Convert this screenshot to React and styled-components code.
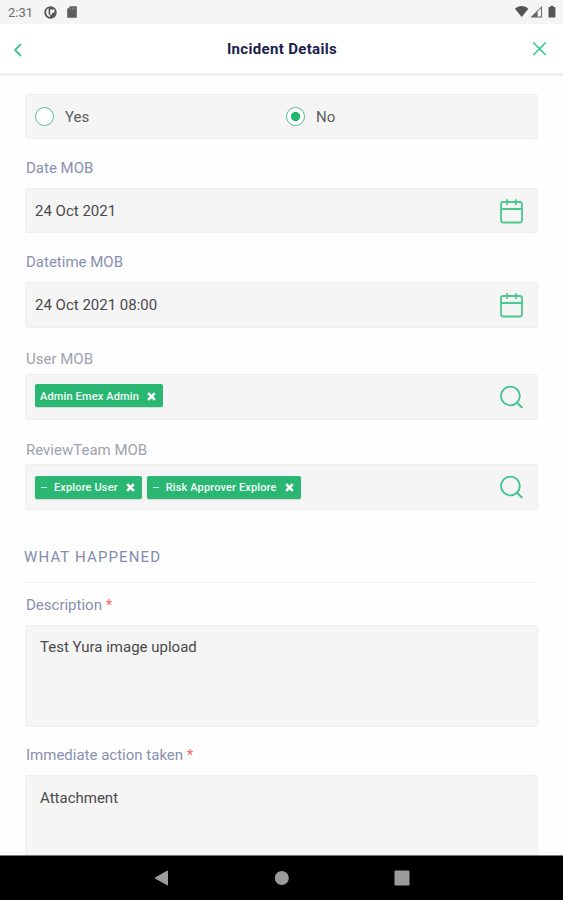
import React, { useState } from 'react';
import styled, { createGlobalStyle } from 'styled-components';

function App() {
  const [answer, setAnswer] = useState('No');

  return (
    <>
      <GlobalStyle />
      <Screen>
        <StatusBar>
          <StatusGroup>
            <Clock>2:31</Clock>
            <ProfileIcon />
            <SdCardIcon />
          </StatusGroup>
          <SystemIcons />
        </StatusBar>

        <Header>
          <IconButton aria-label="Back">
            <svg width="12" height="18" viewBox="0 0 12 18">
              <path d="m10 4-6 6 6 6" fill="none" stroke="#3fc58a" strokeWidth="1.8" />
            </svg>
          </IconButton>
          <Title>Incident Details</Title>
          <IconButton aria-label="Close">
            <svg width="16" height="16" viewBox="0 0 16 16">
              <path d="m1.3 1.5 12.5 12.5M13.8 1.5 1.3 14" fill="none" stroke="#35cb8b" strokeWidth="1.7" />
            </svg>
          </IconButton>
        </Header>

        <Form>
          <RadioBox>
            {['Yes', 'No'].map((option) => (
              <Radio key={option} onClick={() => setAnswer(option)}>
                <RadioDot $checked={answer === option} />
                {option}
              </Radio>
            ))}
          </RadioBox>

          <Label $height={49}>Date MOB</Label>
          <Field $height={45}>
            <span>24 Oct 2021</span>
            <CalendarIcon />
          </Field>

          <Label $height={49}>Datetime MOB</Label>
          <Field $height={46}>
            <span>24 Oct 2021 08:00</span>
            <CalendarIcon />
          </Field>

          <Label $height={46} $top={21} $muted>User MOB</Label>
          <Field $height={46}>
            <Tags $lift={3}>
              <Tag>Admin Emex Admin <TagClose /></Tag>
            </Tags>
            <SearchIcon />
          </Field>

          <Label $height={44} $top={20} $muted>ReviewTeam MOB</Label>
          <Field $height={46}>
            <Tags>
              <Tag><Dash />Explore User <TagClose /></Tag>
              <Tag><Dash />Risk Approver Explore <TagClose /></Tag>
            </Tags>
            <SearchIcon />
          </Field>

          <SectionTitle>WHAT HAPPENED</SectionTitle>

          <Label $height={42} $top={12}>Description <Required>*</Required></Label>
          <TextArea>Test Yura image upload</TextArea>

          <Label $height={48} $top={18}>Immediate action taken <Required>*</Required></Label>
          <TextArea $top={12}>Attachment</TextArea>
        </Form>

        <NavBar>
          <svg width="16" height="18" viewBox="0 0 16 18">
            <path d="M13.5 2v14L1 9Z" fill="#9b9b9b" stroke="#9b9b9b" strokeLinejoin="round" />
          </svg>
          <svg width="16" height="18" viewBox="0 0 16 18">
            <circle cx="7.8" cy="9" r="7" fill="#9b9b9b" />
          </svg>
          <svg width="16" height="18" viewBox="0 0 16 18">
            <rect x="0.5" y="1.5" width="15" height="15" rx="1.2" fill="#9b9b9b" />
          </svg>
        </NavBar>
      </Screen>
    </>
  );
}

const ProfileIcon = () => (
  <svg width="13" height="13" viewBox="0 0 13 13">
    <circle cx="6.5" cy="6.5" r="6.2" fill="#555" />
    <path d="M4.6 2.1v6.1L6 9.4v1.7A4.9 4.9 0 0 1 4.6 2.1Z" fill="#f5f5f5" />
    <path d="M6.2 3.4h4.2v3.4H8v2H6.2Z" fill="#f5f5f5" />
  </svg>
);

const SdCardIcon = () => (
  <svg width="10" height="12" viewBox="0 0 10 12">
    <path d="M3.2.3h5.6c.6 0 1 .4 1 1v9.4c0 .6-.4 1-1 1H1.2c-.6 0-1-.4-1-1V3.3Z" fill="#5c5c5c" />
    <path d="M3.5 1.5v2M5.5 1.5v2M7.5 1.5v2" stroke="#999" strokeWidth="0.8" />
  </svg>
);

const SystemIcons = () => (
  <svg width="42" height="14" viewBox="0 0 42 14">
    <path d="M0 3.7C3.7.2 9.6.2 13.3 3.7L6.7 12Z" fill="#555" />
    <path d="M15.4 12.5 27 1v11.5Z" fill="#666" />
    <path d="M22.6 6.6 26 3.2v8.3h-3.4Z" fill="#f5f5f5" />
    <path d="M35.4.8h3v1.3h1.3c.4 0 .7.3.7.7v9.1c0 .4-.3.7-.7.7h-5.5c-.4 0-.7-.3-.7-.7V2.8c0-.4.3-.7.7-.7h1.2Z" fill="#555" />
  </svg>
);

const CalendarIcon = () => (
  <svg width="24" height="26" viewBox="0 0 24 26">
    <g fill="none" stroke="#4bc88e" strokeWidth="1.8" strokeLinecap="round">
      <rect x="2" y="4" width="21" height="20.5" rx="2.2" />
      <path d="M2 11h21M8.2 2v4.2M16.8 2v4.2" />
    </g>
  </svg>
);

const SearchIcon = () => (
  <svg width="24" height="24" viewBox="0 0 24 24">
    <g fill="none" stroke="#40c58e" strokeWidth="1.9" strokeLinecap="round">
      <circle cx="11.4" cy="11" r="9.4" />
      <path d="m18 17.8 4.7 4.5" />
    </g>
  </svg>
);

const TagClose = () => (
  <svg width="9" height="9" viewBox="0 0 9 9">
    <path d="m1.2 1.2 6.6 6.6M7.8 1.2 1.2 7.8" stroke="#fff" strokeWidth="2.6" />
  </svg>
);

const GlobalStyle = createGlobalStyle`
  body {
    margin: 0;
    background: #fff;
    overflow: hidden;
  }
`;

const Screen = styled.div`
  height: 900px;
  display: flex;
  flex-direction: column;
  overflow: hidden;
  background: #fefefe;
  color: #4a4a4a;
  font-family: Roboto, 'Liberation Sans', sans-serif;
  font-size: 15px;
`;

const StatusBar = styled.div`
  flex: none;
  height: 24px;
  padding: 0 6px 0 8px;
  display: flex;
  align-items: center;
  justify-content: space-between;
  background: #f5f5f5;
`;

const StatusGroup = styled.div`
  display: flex;
  align-items: center;
  gap: 10px;
`;

const Clock = styled.span`
  width: 26px;
  padding-top: 1px;
  color: #707070;
  font-size: 13px;
  line-height: 24px;
`;

const Header = styled.header`
  flex: none;
  box-sizing: border-box;
  height: 52px;
  padding: 0 15px 0 11px;
  display: grid;
  grid-template-columns: 16px 1fr 16px;
  align-items: center;
  background: #fff;
  border-bottom: 3px solid #ecf0f0;
`;

const IconButton = styled.button`
  display: flex;
  padding: 0;
  border: none;
  background: none;
  cursor: pointer;
`;

const Title = styled.h1`
  margin: 0;
  padding-left: 5px;
  color: #1b1e4b;
  font-size: 15px;
  font-weight: 700;
  letter-spacing: 0.33px;
  text-align: center;
`;

const Form = styled.main`
  flex: 1;
  min-height: 0;
  padding: 18px 25px 0;
  overflow: hidden;
`;

const RadioBox = styled.div`
  box-sizing: border-box;
  height: 45px;
  padding: 0 9px;
  display: grid;
  grid-template-columns: 251px 1fr;
  align-items: center;
  background: #f5f5f5;
  border: 1px solid #efefef;
  border-radius: 3px;
`;

const Radio = styled.div`
  display: flex;
  align-items: center;
  gap: 11px;
  color: #5c5c5c;
  cursor: pointer;
`;

const RadioDot = styled.span`
  box-sizing: border-box;
  width: 19px;
  height: 19px;
  border: 1.5px solid #4fbf8b;
  border-radius: 50%;
  background: ${({ $checked }) =>
    $checked ? 'radial-gradient(circle, #20b46c 4.2px, #fff 5px)' : '#fff'};
`;

const Label = styled.div`
  box-sizing: border-box;
  height: ${({ $height }) => $height}px;
  padding: ${({ $top = 19 }) => $top}px 1px 0;
  color: ${({ $muted }) => ($muted ? '#9da2ae' : '#8890af')};
  line-height: 20px;
`;

const Required = styled.span`
  color: #ff5f5f;
`;

const Field = styled.div`
  box-sizing: border-box;
  height: ${({ $height }) => $height}px;
  padding: 0 14px 0 9px;
  display: flex;
  align-items: center;
  justify-content: space-between;
  background: #f5f5f5;
  border: 1px solid #efefef;
  border-radius: 3px;
`;

const Tags = styled.div`
  display: flex;
  gap: 5px;
  padding-bottom: ${({ $lift = 0 }) => $lift}px;
`;

const Tag = styled.span`
  box-sizing: border-box;
  height: 23px;
  padding: 1px 7px 0 5px;
  display: flex;
  align-items: center;
  gap: 8px;
  border-radius: 2px;
  background: #2ab673;
  box-shadow: 0 1px 1px rgba(0, 0, 0, 0.12);
  color: #f4fff9;
  font-size: 11px;
  font-weight: 500;
  letter-spacing: 0.14px;
  white-space: nowrap;
`;

const Dash = styled.span`
  width: 6px;
  height: 1px;
  margin-left: 1px;
  margin-right: -1px;
  background: #dff6ea;
`;

const SectionTitle = styled.h2`
  box-sizing: border-box;
  height: 73px;
  margin: 0 0 0 -1px;
  padding-top: 37px;
  border-bottom: 1px solid #f3f4f4;
  color: #838cad;
  font-size: 15px;
  font-weight: 400;
  letter-spacing: 1.13px;
  line-height: 20px;
`;

const TextArea = styled.div`
  box-sizing: border-box;
  height: 102px;
  padding: ${({ $top = 11 }) => $top}px 14px;
  background: #f5f5f5;
  border: 1px solid #efefef;
  border-radius: 3px;
  line-height: 20px;
`;

const NavBar = styled.nav`
  flex: none;
  box-sizing: border-box;
  height: 45px;
  display: flex;
  align-items: center;
  justify-content: center;
  gap: 104px;
  background: #000;
  border-top: 1px solid #777;
`;

export default App;
